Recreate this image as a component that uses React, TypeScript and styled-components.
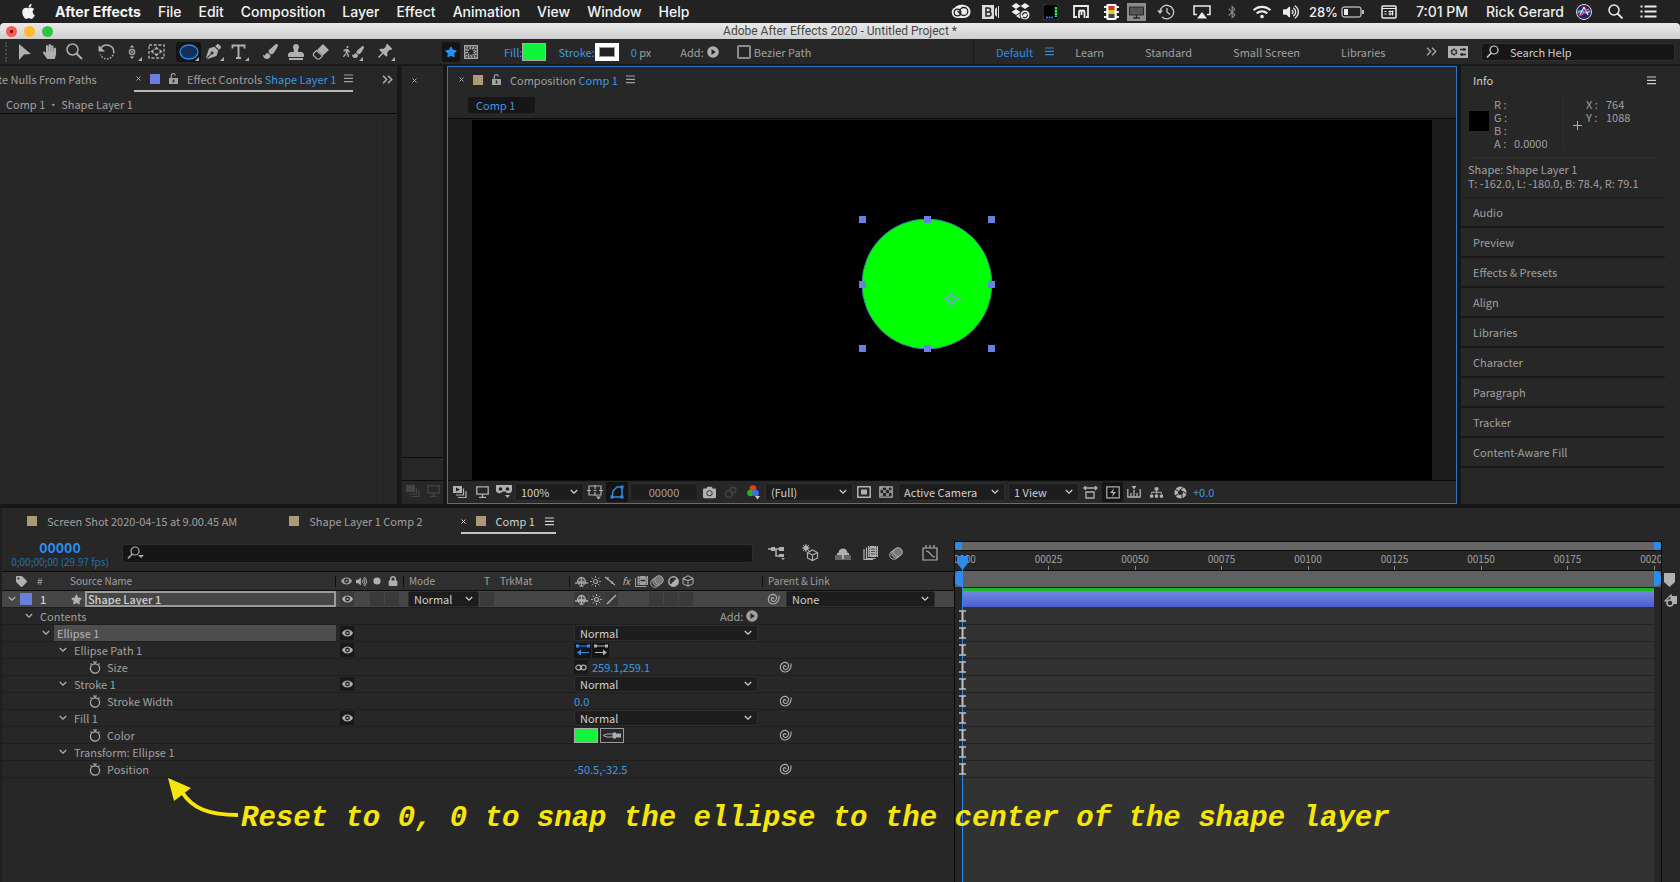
import React, { ReactNode } from 'react';
import styled, { createGlobalStyle, css } from 'styled-components';
import {
  FaApple, FaBluetoothB, FaCamera, FaDropbox, FaHandPaper, FaLock,
  FaPaintBrush, FaPenNib, FaSitemap, FaStar, FaTag, FaVolumeUp, FaWifi, FaWalking, FaStamp,
} from 'react-icons/fa';

const c = {
  panel: '#272727',
  gutter: '#171717',
  well: '#1d1d1d',
  field: '#161616',
  line: '#0c0c0c',
  text: '#a0a0a0',
  bright: '#cfcfcf',
  icon: '#b0b0b0',
  blue: '#3f98e0',
  accent: '#2d8ceb',
  tan: '#ab9a76',
  layer: '#6a7ede',
};

const Global = createGlobalStyle`
  *, *::before, *::after { box-sizing: border-box; }
  body { margin: 0; background: ${c.gutter}; }
  body, button, input, select {
    font-family: "Noto Sans CJK SC", "Noto Sans", sans-serif;
    font-size: 11px;
    line-height: 16px;
    color: ${c.text};
  }
  button { border: 0; padding: 0; background: none; white-space: nowrap; }
  input, select { margin: 0; border: 0; padding: 0; outline: 0; }
  svg { display: block; flex: none; }
`;

/* ---------- shared parts ---------- */

const Shell = styled.div`
  display: flex;
  flex-direction: column;
  min-height: 100vh;
  overflow: hidden;
`;

const IconCell = styled.button<{ $w?: number; $on?: boolean; $dim?: boolean; $h?: number }>`
  display: flex;
  flex: none;
  align-items: center;
  justify-content: center;
  position: relative;
  width: ${p => p.$w ?? 25}px;
  height: ${p => p.$h ?? 20}px;
  border-radius: 2px;
  color: ${p => (p.$dim ? '#444' : c.icon)};
  background: ${p => (p.$on ? '#141414' : 'none')};
`;

const Corner = styled.span`
  position: absolute;
  right: 2px;
  bottom: 1px;
  border: 2px solid transparent;
  border-right-color: ${c.icon};
  border-bottom-color: ${c.icon};
`;

const Swatch = styled.span<{ $color: string; $s?: number }>`
  flex: none;
  width: ${p => p.$s ?? 10}px;
  height: ${p => p.$s ?? 10}px;
  background: ${p => p.$color};
`;

const Blue = styled.span`
  color: ${c.blue};
`;

const Svg = ({ w = 18, h = 18, children }: { w?: number; h?: number; children: ReactNode }) => (
  <svg width={w} height={h} viewBox={`0 0 ${w} ${h}`} fill="none" stroke="currentColor" strokeWidth="1.5">{children}</svg>
);

const Burger = () => <Svg w={9} h={9}><path d="M0 1h9M0 4.300h9M0 7.600h9" strokeWidth="1.200" /></Svg>;
const Cross = () => <Svg w={5} h={5}><path d="M.5 .5l4 4M4.500 .5l-4 4" strokeWidth="1" /></Svg>;
const Chev = () => <Svg w={8} h={6}><path d="M.8 1l3.200 3.200L7.200 1" strokeWidth="1.300" /></Svg>;
const More = () => <Svg w={11} h={9}><path d="M1 .8l3.700 3.700L1 8.200M6 .8l3.700 3.700L6 8.200" /></Svg>;
const OpenLock = () => (
  <Svg w={9} h={11}><path d="M2.300 5V2.800a2 2 0 0 1 4-.3" strokeWidth="1.300" /><path d="M0 5h9v6H0z" fill="currentColor" stroke="none" /><path d="M4.500 6.500v3" stroke={c.panel} /></Svg>
);
const Lens = ({ caret }: { caret?: boolean }) => (
  <Svg w={18} h={14}><circle cx="8" cy="5" r="4" strokeWidth="1.200" /><path d="M5.200 8L1 12.500" />{caret && <path d="M11 9h6l-3 3z" fill="currentColor" stroke="none" />}</Svg>
);
const Eye = () => (
  <Svg w={11} h={8}><path d="M0 4C2-.8 9-.8 11 4 9 8.800 2 8.800 0 4z" fill="currentColor" stroke="none" /><circle cx="5.500" cy="4" r="2.400" fill="#222" stroke="none" /><circle cx="5.500" cy="4" r="1.100" fill="currentColor" stroke="none" /></Svg>
);
const Play = () => (
  <Svg w={12} h={12}><circle cx="6" cy="6" r="5.800" fill="currentColor" stroke="none" /><path d="M4.500 3l4.200 3-4.200 3z" fill="#222" stroke="none" /></Svg>
);
const Watch = () => (
  <Svg w={12} h={13}><circle cx="6" cy="7.500" r="4.600" strokeWidth="1.200" /><path d="M4 1h4M6 1v2M1.500 2.500l1 1M10.500 2.500l-1 1" strokeWidth="1.200" /></Svg>
);
const Whip = () => (
  <Svg w={13} h={12}><path d="M12 2.500C12.700 8 9 11.300 5.500 11 2 10.500 .6 7 1.800 4.300 3 1.500 6.500 .5 8.500 2.300 10.500 4.300 9.500 8 7 8.500 5 8.800 3.700 7 4.500 5.500 5.200 4.200 7 4.500 6.800 6" strokeWidth="1.100" /></Svg>
);
const Shy = () => (
  <Svg w={13} h={11}><path d="M2.500 6a4 4.500 0 0 1 8 0z" fill="currentColor" fillOpacity=".25" strokeWidth="1.300" /><path d="M6.500 1.500v8.500M0 7h13M4 7v2M9 7v2M4.500 10h4" strokeWidth="1.300" /></Svg>
);
const Sun = () => (
  <Svg w={11} h={11}><circle cx="5.500" cy="5.500" r="2" strokeWidth="1.200" /><path d="M5.500 0v2M5.500 9v2M0 5.500h2M9 5.500h2M1.600 1.600l1.400 1.400M8 8l1.400 1.400M9.400 1.600L8 3M3 8L1.600 9.400" strokeWidth="1" /></Svg>
);
const Film = () => (
  <Svg w={13} h={11}><path d="M2.500 0h10.500v9H2.500z" fill="currentColor" stroke="none" /><path d="M.5 2v8.500h11" strokeWidth="1" /><path d="M4.300 0v9M11.200 0v9" stroke="#2a2a2a" strokeWidth=".9" strokeDasharray="1.200 1.200" /><path d="M5.500 4.500h4.500" stroke="#2a2a2a" /></Svg>
);
const BigFilm = () => (
  <Svg w={15} h={14}><path d="M5 0h10v11H5z" fill="currentColor" stroke="none" /><path d="M3.500 1.500v11h9M1 3v10.500h9" strokeWidth="1.200" /><path d="M6.500 0v11M13.500 0v11" stroke="#2a2a2a" strokeWidth=".9" strokeDasharray="1.300 1.300" /><path d="M8 3h4M8 5.500h4M8 8h4" stroke="#2a2a2a" strokeWidth=".8" /></Svg>
);
const Blur = () => (
  <Svg w={14} h={13}><circle cx="5" cy="8" r="4.300" strokeWidth="1" /><circle cx="7" cy="6.500" r="4.300" strokeWidth="1" fill="#666" /><circle cx="9" cy="5" r="4.300" strokeWidth="1" fill="#777" /></Svg>
);
const Cube = () => (
  <Svg w={12} h={12}><path d="M6 .8l5 2.500v5.400l-5 2.500-5-2.500V3.300zM1 3.300l5 2.500 5-2.500M6 5.800v5.400" strokeWidth="1.100" /></Svg>
);

/* ---------- system menu bar ---------- */

const MenuBar = styled.nav`
  display: flex;
  align-items: center;
  height: 23px;
  padding: 0 20px;
  background: #222;
  color: #f2f2f2;
`;

const MenuItem = styled.button<{ $bold?: boolean }>`
  font: ${p => (p.$bold ? 700 : 500)} 14px/20px Inter, sans-serif;
  color: #f4f4f4;
  margin-right: 17px;
`;

const AppleMark = styled.span`
  margin-right: 18px;
`;

const Status = styled.div`
  display: flex;
  align-items: center;
  margin-left: auto;
`;

const StatusCell = styled.span<{ $w: number }>`
  display: flex;
  align-items: center;
  justify-content: center;
  width: ${p => p.$w}px;
  color: #ececec;
  font: 500 13px/20px Inter, sans-serif;
  white-space: nowrap;
`;

const StatusText = styled(StatusCell)`
  font-size: 14px;
`;

const Percent = styled(StatusCell)`
  justify-content: flex-end;
`;

/* ---------- window title and toolbar ---------- */

const TitleBar = styled.header`
  display: flex;
  align-items: center;
  justify-content: center;
  position: relative;
  height: 16px;
  background: linear-gradient(#e9e9e9, #d0d0d0);
  border-radius: 4px 4px 0 0;
  font: 400 12px/16px Roboto, sans-serif;
  color: #464646;
`;

const Lights = styled.span`
  position: absolute;
  left: 6px;
  top: 3px;
  display: flex;
  gap: 7px;
`;

const Light = styled.button<{ $color: string }>`
  width: 11px;
  height: 11px;
  border-radius: 50%;
  background: ${p => p.$color};
`;

const RedLight = styled(Light)`
  background: radial-gradient(circle, #5a0c08 0 1px, #fb5a52 2px);
`;

const ToolBar = styled.div`
  display: flex;
  align-items: center;
  height: 26px;
  background: ${c.panel};
  border-bottom: 1px solid #1c1c1c;
`;

const Tools = styled.div`
  display: flex;
  gap: 7px;
  width: 434px;
`;

const Grip = styled.span`
  width: 2px;
  height: 20px;
  margin: 0 -2px 0 5px;
  border-left: 2px dotted #484848;
`;

const ToolGroup = styled.div`
  display: flex;
`;

const Options = styled.div`
  display: flex;
  align-items: center;
  height: 100%;
  padding-left: 8px;
  flex: 1;
  border-right: 1px solid #1b1b1b;
`;

const OptionLink = styled.button<{ $ml: number }>`
  color: ${c.blue};
  margin-left: ${p => p.$ml}px;
`;

const FillChip = styled.button`
  width: 24px;
  height: 18px;
  background: #10f53c;
  border: 1px solid #aaa;
`;

const StrokeChip = styled(FillChip)`
  background: #222;
  border: 4px solid #fff;
  outline: 1px solid #999;
  outline-offset: -5px;
`;

const Amount = styled.span`
  margin: 0 29px 0 12px;
`;

const CheckLabel = styled.label`
  display: flex;
  align-items: center;
  gap: 3px;
  margin-left: 15px;
`;

const Check = styled.input`
  appearance: none;
  width: 14px;
  height: 14px;
  border: 2px solid #8c8c8c;
  border-radius: 2px;
`;

const Workspaces = styled.div`
  display: flex;
  align-items: center;
  gap: 41px;
  padding-left: 22px;
  width: 471px;
`;

const WorkspaceTab = styled.button<{ $on?: boolean }>`
  display: flex;
  align-items: center;
  gap: 12px;
  margin-right: ${p => (p.$on ? -20 : 0)}px;
  color: ${p => (p.$on ? c.accent : c.text)};
`;

const HelpBox = styled.label`
  display: flex;
  align-items: center;
  gap: 6px;
  width: 194px;
  height: 18px;
  margin: 0 5px 0 10px;
  padding-left: 4px;
  background: ${c.field};
  border: 1px solid #303030;
  border-radius: 3px;
  color: ${c.bright};
`;

const TextInput = styled.input`
  flex: 1;
  min-width: 0;
  height: 16px;
  background: transparent;
  color: ${c.bright};
  &::placeholder { color: ${c.bright}; opacity: 1; }
`;

/* ---------- upper workspace ---------- */

const Upper = styled.div`
  display: flex;
  gap: 4px;
  flex: 443 1 443px;
  padding: 1px 0 4px;
`;

const Panel = styled.section<{ $w?: number }>`
  display: flex;
  flex-direction: column;
  flex: none;
  width: ${p => p.$w}px;
  min-width: 0;
  background: ${c.panel};
`;

const PanelTabs = styled.div`
  display: flex;
  align-items: flex-start;
  height: 30px;
  padding-right: 4px;
  overflow: hidden;
`;

const PanelTab = styled.button<{ $line?: boolean; $ml?: number }>`
  display: flex;
  align-items: center;
  gap: 9px;
  height: 26px;
  margin-left: ${p => p.$ml ?? 0}px;
  padding: 1px 0 0 2px;
  color: ${c.text};
  border-bottom: 2px solid ${p => (p.$line ? '#b8b8b8' : 'transparent')};
`;

const CutTab = styled(PanelTab)`
  margin-left: -4px;
  width: 138px;
`;

const TabTitle = styled.span`
  display: flex;
  align-items: center;
  gap: 8px;
`;

const TabsMore = styled.button`
  margin: 9px 0 0 auto;
  color: ${c.icon};
`;

const Source = styled.div`
  height: 18px;
  padding: 0 6px;
  border-bottom: 1px solid ${c.line};
`;

const Empty = styled.div`
  flex: 1;
  margin-right: 17px;
  border-right: 1px solid #2b2b2b;
`;

const Sliver = styled(Panel)`
  border-left: 1px solid #202020;
`;

const SliverTop = styled.div`
  flex: 1;
  padding: 12px 10px;
  color: ${c.text};
`;

const SliverLine = styled.div`
  height: 24px;
  border: 1px solid ${c.line};
  border-width: 1px 0;
`;

const SliverFoot = styled.div`
  display: flex;
  height: 23px;
`;

const CompPanel = styled(Panel)`
  flex: 1;
  border: 1px solid #3079c2;
`;

const CompCrumb = styled.div`
  height: 22px;
  padding-left: 20px;
  border-bottom: 1px solid ${c.line};
`;

const Crumb = styled.button`
  width: 67px;
  height: 16px;
  padding-left: 8px;
  text-align: left;
  color: ${c.blue};
  background: ${c.field};
  border-radius: 2px;
`;

const Viewer = styled.div`
  flex: 1;
  padding: 1px 24px 0;
  background: ${c.well};
`;

const Stage = styled.div`
  position: relative;
  height: 100%;
  background: #000;
`;

const Shape = styled.svg`
  position: absolute;
  left: calc(50% - 95px);
  top: 94px;
`;

const CompFoot = styled.div`
  display: flex;
  align-items: center;
  height: 23px;
  padding-left: 1px;
  border-top: 1px solid ${c.line};
`;

const SelectBox = styled.span<{ $w: number; $h?: number; $ml?: number }>`
  display: flex;
  align-items: center;
  flex: none;
  position: relative;
  width: ${p => p.$w}px;
  height: ${p => p.$h ?? 18}px;
  margin-left: ${p => p.$ml ?? 0}px;
  background: ${c.well};
  border: 1px solid #2f2f2f;
  border-radius: 2px;
  color: ${c.bright};
  > svg { position: absolute; right: 5px; pointer-events: none; }
`;

const Select = styled.select`
  appearance: none;
  width: 100%;
  height: 100%;
  padding-left: 5px;
  background: transparent;
  color: ${c.bright};
  line-height: 14px;
`;

const Drop = ({ w, h, ml, value, label }: { w: number; h?: number; ml?: number; value: string; label: string }) => (
  <SelectBox $w={w} $h={h} $ml={ml}>
    <Select aria-label={label} defaultValue={value}><option>{value}</option></Select>
    <Chev />
  </SelectBox>
);

const Frame = styled.button`
  width: 68px;
  height: 18px;
  margin-left: 2px;
  background: ${c.well};
  border: 1px solid #2f2f2f;
  border-radius: 2px;
  color: ${c.text};
`;

const Exposure = styled.button`
  color: ${c.blue};
`;

/* ---------- info panel and collapsed panels ---------- */

const Side = styled.aside`
  flex: none;
  width: 219px;
  padding: 0 15px 0 0;
  background: ${c.panel};
`;

const InfoHead = styled.div`
  display: flex;
  align-items: center;
  justify-content: space-between;
  height: 28px;
  padding: 0 9px 0 12px;
  color: ${c.bright};
`;

const InfoBody = styled.div`
  display: grid;
  grid-template-columns: 25px 70px 14px 1fr;
  margin: 0 8px 0 8px;
  height: 64px;
  border-bottom: 1px solid #303030;
`;

const InfoColor = styled.span`
  width: 20px;
  height: 20px;
  margin-top: 17px;
  background: #000;
`;

const InfoList = styled.dl`
  display: grid;
  grid-template-columns: 18px 1fr;
  align-content: start;
  margin: 0;
  line-height: 13px;
  height: 57px;
  padding-top: 4px;
  border-right: 1px solid #2e2e2e;
`;

const InfoRight = styled(InfoList)`
  padding-left: 8px;
  border: 0;
`;

const Term = styled.dt`
  margin: 0;
`;

const Data = styled.dd`
  margin: 0 0 0 2px;
`;

const Plus = styled.span`
  margin: 27px 0 0 9px;
  color: ${c.icon};
`;

const InfoNote = styled.p`
  margin: 0;
  padding: 4px 0 0 7px;
  height: 40px;
  line-height: 14px;
  border-bottom: 1px solid #1c1c1c;
  white-space: nowrap;
`;

const Collapsed = styled.button`
  display: block;
  width: 204px;
  height: 30px;
  padding: 0 0 0 12px;
  text-align: left;
  color: ${c.text};
  border-bottom: 2px solid #191919;
`;

/* ---------- timeline ---------- */

const Timeline = styled.section`
  display: flex;
  flex-direction: column;
  flex: 374 1 374px;
  position: relative;
  background: ${c.panel};
  border-left: 2px solid #1f1f1f;
`;

const CompTabs = styled.div`
  display: flex;
  gap: 50px;
  height: 32px;
  padding-left: 25px;
`;

const CompTab = styled.button<{ $on?: boolean }>`
  display: flex;
  align-items: center;
  gap: 10px;
  height: 26px;
  padding: 2px 2px 0 0;
  margin-left: ${p => (p.$on ? -14 : 0)}px;
  color: ${p => (p.$on ? '#d2d2d2' : c.text)};
  border-bottom: 2px solid ${p => (p.$on ? '#c4c4c4' : 'transparent')};
`;

const TimelineBody = styled.div`
  display: flex;
  flex: 1;
`;

const Outline = styled.div`
  flex: none;
  width: 952px;
`;

const OutlineTools = styled.div`
  display: flex;
  align-items: center;
  height: 32px;
  padding-bottom: 5px;
  border-bottom: 1px solid ${c.line};
`;

const Clock = styled.div`
  width: 116px;
  text-align: center;
  font-size: 10px;
  line-height: 13px;
  color: #2672ad;
`;

const Big = styled.div`
  font-size: 14px;
  font-weight: 700;
  line-height: 16px;
  color: ${c.accent};
`;

const LayerSearch = styled.label`
  display: flex;
  align-items: center;
  width: 631px;
  height: 19px;
  margin: 0 8px 0 4px;
  padding-left: 4px;
  background: #151515;
  border: 1px solid #2e2e2e;
  border-radius: 3px;
  color: ${c.icon};
`;

const columns = css`
  display: grid;
  grid-template-columns: 334px 68px 166px 193px 1fr;
`;

const HeadRow = styled.div`
  ${columns}
  height: 19px;
  background: #2f2f2f;
  border-bottom: 1px solid ${c.line};
  font-size: 10px;
  line-height: 18px;
`;

const HeadCell = styled.div`
  display: flex;
  align-items: center;
  gap: 2px;
  padding-left: 5px;
  position: relative;
  color: ${c.text};
  &::after {
    content: "";
    position: absolute;
    right: 0;
    top: 4px;
    height: 11px;
    border-right: 1px solid #111;
  }
`;

const Text = styled.span<{ $w: number }>`
  flex: none;
  width: ${p => p.$w}px;
`;

const Row = styled.div<{ $layer?: boolean }>`
  ${columns}
  height: 17px;
  border-bottom: 1px solid #1f1f1f;
  background: ${p => (p.$layer ? '#464646' : 'none')};
`;

const Name = styled.div<{ $depth: number }>`
  display: flex;
  align-items: center;
  padding-left: ${p => p.$depth * 17 + 2}px;
  min-width: 0;
`;

const Twirl = styled.button`
  display: flex;
  align-items: center;
  justify-content: center;
  flex: none;
  width: 16px;
  height: 16px;
  color: ${c.icon};
`;

const NameText = styled.span<{ $on?: boolean }>`
  flex: 1;
  height: 16px;
  line-height: 16px;
  padding-left: 3px;
  color: ${p => (p.$on ? '#b4b4b4' : c.text)};
  background: ${p => (p.$on ? '#4d4d4d' : 'none')};
`;

const StopWatch = styled.button`
  margin: 0 3px 0 34px;
  color: ${c.icon};
`;

const NameInput = styled.input`
  width: 252px;
  height: 16px;
  margin-left: 3px;
  padding-left: 1px;
  background: transparent;
  border: 2px solid #9c9c9c;
  color: ${c.bright};
  font-weight: 500;
  line-height: 12px;
`;

const Index = styled.span`
  width: 39px;
  padding-left: 8px;
  color: ${c.bright};
  font-weight: 500;
`;

const Cell = styled.div`
  display: flex;
  align-items: center;
  padding-left: 4px;
  gap: 1px;
`;

const Box = styled.button<{ $none?: boolean; $dark?: boolean }>`
  display: flex;
  align-items: center;
  justify-content: center;
  flex: none;
  width: 14px;
  height: 14px;
  color: ${c.icon};
  background: ${p => (p.$none ? 'none' : p.$dark ? '#181818' : '#3a3a3a')};
`;

const Value = styled.button<{ $ml?: number }>`
  margin-left: ${p => p.$ml ?? 0}px;
  color: ${c.blue};
`;

const AddHint = styled.button`
  display: flex;
  align-items: center;
  gap: 3px;
  margin-left: 146px;
  color: ${c.text};
`;

const PickWhip = styled.button<{ $ml: number }>`
  margin: 0 5px 0 ${p => p.$ml}px;
  color: ${c.icon};
`;

const ColorChip = styled.button`
  width: 24px;
  height: 15px;
  background: #10f53c;
  border: 1px solid #aaa;
`;

const DropperBtn = styled.button`
  width: 24px;
  height: 15px;
  margin-left: 1px;
  border: 1px solid #999;
  color: ${c.icon};
`;

/* ---------- time graph ---------- */

const Graph = styled.div`
  flex: 1;
  display: flex;
  flex-direction: column;
  position: relative;
  min-width: 0;
  overflow: hidden;
  padding-top: 1px;
  border: 1px solid ${c.line};
  border-width: 0 1px;
`;

const NavBar = styled.div`
  display: flex;
  height: 10px;
  border: 1px solid ${c.line};
  border-width: 1px 0;
  background: #666;
`;

const Knob = styled.span<{ $end?: boolean; $h: number }>`
  width: 7px;
  height: ${p => p.$h}px;
  background: ${c.accent};
  border-radius: ${p => (p.$end ? '0 5px 5px 0' : '5px 0 0 5px')};
  margin-left: ${p => (p.$end ? 'auto' : '0')};
`;

const Ruler = styled.div`
  display: flex;
  justify-content: space-between;
  height: 20px;
  padding: 1px 7px 0;
  border-bottom: 1px solid ${c.line};
`;

const Tick = styled.span`
  display: flex;
  flex-direction: column;
  align-items: center;
  width: 0;
  font-size: 10px;
  line-height: 14px;
  color: ${c.text};
  &::after {
    content: "";
    width: 1px;
    height: 4px;
    background: #8a8a8a;
  }
`;

const WorkArea = styled.div`
  display: flex;
  height: 16px;
  background: #606060;
`;

const Cached = styled.div`
  height: 4px;
  margin: 0 7px;
  background: #20b42a;
  border-top: 1px solid #0d2a0d;
`;

const Tracks = styled.div`
  flex: 1;
  margin: 0 7px;
  background: #323232;
`;

const Bar = styled.div`
  height: 16px;
  margin-bottom: 1px;
  background: linear-gradient(#7388de, #4a5fd0);
`;

const Lane = styled.div`
  height: 17px;
  border-bottom: 1px solid #232323;
  color: #c0c0c0;
  > svg { margin-left: -4px; position: relative; z-index: 1; }
`;

const PlayHead = styled.div`
  position: absolute;
  left: 7px;
  top: 16px;
  bottom: 0;
  border-left: 1px solid ${c.accent};
  color: ${c.accent};
  > svg { margin-left: -6px; }
`;

const Edge = styled.div`
  width: 18px;
  padding: 33px 0 0 2px;
`;

const EdgeBtn = styled.button`
  display: block;
  margin-bottom: 7px;
  color: ${c.icon};
`;

/* ---------- annotation ---------- */

const Note = styled.p`
  position: absolute;
  left: 166px;
  top: 270px;
  display: flex;
  align-items: flex-start;
  gap: 2px;
  margin: 0;
  pointer-events: none;
  color: #f7e60c;
  font: italic 700 29px/32px "Liberation Mono", monospace;
  white-space: nowrap;
`;

const NoteText = styled.span`
  padding-top: 25px;
`;

/* ---------- data ---------- */

const menus = ['File', 'Edit', 'Composition', 'Layer', 'Effect', 'Animation', 'View', 'Window', 'Help'];
const sidePanels = ['Audio', 'Preview', 'Effects & Presets', 'Align', 'Libraries', 'Character', 'Paragraph', 'Tracker', 'Content-Aware Fill'];
const ticks = ['00000', '00025', '00050', '00075', '00100', '00125', '00150', '00175', '00200'];

type RowData = { name: string; depth: number; prop?: boolean; eye?: boolean; on?: boolean; value?: ReactNode };

const blend = <Drop w={184} h={16} value="Normal" label="Blend mode" />;

const rows: RowData[] = [
  { name: 'Contents', depth: 1, value: <AddHint>Add: <Play /></AddHint> },
  { name: 'Ellipse 1', depth: 2, eye: true, on: true, value: blend },
  {
    name: 'Ellipse Path 1', depth: 3, eye: true, value: (
      <>
        <IconCell aria-label="Forward path" $w={17} $h={15} $on><Svg w={14} h={12}><path d="M2 2h10M3 8.500h10" stroke={c.accent} strokeWidth="1.200" /><path d="M0 .5h3v3H0zM11 .5h3v3h-3zM1 8.500l4-3v6z" fill={c.accent} stroke="none" /></Svg></IconCell>
        <IconCell aria-label="Reverse path" $w={17} $h={15} $on><Svg w={14} h={12}><path d="M2 2h10M1 8.500h10" strokeWidth="1.200" /><path d="M0 .5h3v3H0zM11 .5h3v3h-3zM13 8.500l-4-3v6z" fill="currentColor" stroke="none" /></Svg></IconCell>
      </>
    ),
  },
  {
    name: 'Size', depth: 3, prop: true, value: (
      <>
        <Box $dark aria-label="Constrain"><Svg w={12} h={7}><ellipse cx="3.800" cy="3.500" rx="3" ry="2.300" strokeWidth="1.200" /><ellipse cx="8.200" cy="3.500" rx="3" ry="2.300" strokeWidth="1.200" /></Svg></Box>
        <Value $ml={3}>259.1,259.1</Value>
      </>
    ),
  },
  { name: 'Stroke 1', depth: 3, eye: true, value: blend },
  { name: 'Stroke Width', depth: 3, prop: true, value: <Value>0.0</Value> },
  { name: 'Fill 1', depth: 3, eye: true, value: blend },
  {
    name: 'Color', depth: 3, prop: true, value: (
      <>
        <ColorChip aria-label="Color" />
        <DropperBtn aria-label="Eyedropper"><Svg w={22} h={13}><path d="M2 6.500l4-1.500h6v3H6z" strokeWidth="1" /><path d="M12 3.500h3v1h5v4h-5v1h-3z" fill="currentColor" stroke="none" /></Svg></DropperBtn>
      </>
    ),
  },
  { name: 'Transform: Ellipse 1', depth: 3 },
  { name: 'Position', depth: 3, prop: true, value: <Value>-50.5,-32.5</Value> },
];

const SystemBar = () => (
  <MenuBar>
    <AppleMark><FaApple size={17} /></AppleMark>
    <MenuItem $bold>After Effects</MenuItem>
    {menus.map(m => <MenuItem key={m}>{m}</MenuItem>)}
    <Status>
      <StatusCell $w={30}><Svg w={20} h={15}><path d="M6 14a5.500 5.500 0 0 1-2-10.500C6 1 9 .3 12 .8c4 .3 7.500 3 7.500 7S16.500 14 13 14z" fill="#eee" stroke="none" /><circle cx="6.500" cy="8.500" r="3.300" stroke="#222" strokeWidth="1.300" /><circle cx="12.800" cy="7.500" r="4" stroke="#222" strokeWidth="1.300" /><path d="M6.500 7l4 4" stroke="#222" strokeWidth="1.300" /></Svg></StatusCell>
      <StatusCell $w={30}><Svg w={18} h={14}><path d="M0 0h12v14H0zM13 4l2-2v10l-2-2zM16 1h1v12h-1z" fill="#ddd" stroke="none" /><path d="M4 3v8h3a2 2 0 0 0 0-4H4h2.500a2 2 0 0 0 0-4z" stroke="#222" /></Svg></StatusCell>
      <StatusCell $w={30}><Svg w={20} h={18}><g transform="scale(.036)"><path d="M0 0h1v1H0z" fill="none" stroke="none" /></g><path d="M5 0l4.500 3L5 6 .5 3zM14 0l4.500 3L14 6 9.500 3zM5 6l4.500 3L5 12 .5 9zM5 13l4-2.500 3 2-3 3z" fill="#eee" stroke="none" /><circle cx="14" cy="12" r="5" fill="#eee" stroke="#222" strokeWidth="1" /><path d="M11.500 12.500a2.600 2.600 0 0 1 4.500-2M16.500 11.500a2.600 2.600 0 0 1-4.500 2.300" stroke="#222" strokeWidth="1.200" /></Svg></StatusCell>
      <StatusCell $w={30}><Svg w={16} h={16}><rect width="16" height="16" rx="3" fill="#050505" stroke="#444" strokeWidth="1" /><path d="M3 13.500h7" stroke="#2d6be8" strokeWidth="2" strokeDasharray="2 .6" /><path d="M13 3v10" stroke="#44e052" strokeWidth="2.500" strokeDasharray="2.400 .6" /></Svg></StatusCell>
      <StatusCell $w={30}><Svg w={18} h={15}><path d="M5 13H2V2h14v11h-2M7 14V8c0-2 2.500-2 2.500 0v3V8c0-2 3-2 3 0v6" strokeWidth="1.800" /></Svg></StatusCell>
      <StatusCell $w={30}><Svg w={15} h={16}><path d="M0 3h15M0 8h15M0 13h15" strokeWidth="2" /><rect x="3" y=".8" width="9" height="14.400" rx="1" fill="#eee" stroke="#fff" /><path d="M4.500 2h6v4h-6z" fill="#d93025" stroke="none" /><path d="M4.500 6h6v4h-6z" fill="#e8c81e" stroke="none" /><path d="M4.500 10h6v4h-6z" fill="#444" stroke="none" /></Svg></StatusCell>
      <StatusCell $w={20}><Svg w={19} h={18}><path d="M0 0h19v18H0z" fill="#8c8c8c" stroke="none" /><path d="M2.500 4h14v8h-14z" fill="#555" stroke="#2a2a2a" strokeWidth="1" /><path d="M9.500 12v2.500M6 15h7" stroke="#2a2a2a" /></Svg></StatusCell>
      <StatusCell $w={40}><Svg w={18} h={16}><path d="M3 8a6.800 6.800 0 1 1 2 4.900M10 4v4l3 2.500" stroke="#ccc" strokeWidth="1.300" /><path d="M0 6.500h6L3 10z" fill="#ccc" stroke="none" /></Svg></StatusCell>
      <StatusCell $w={32}><Svg w={18} h={14}><path d="M4 9.500H1V1h16v8.500h-3" /><path d="M9 7l5 6.500H4z" fill="currentColor" stroke="none" /></Svg></StatusCell>
      <StatusCell $w={28}><FaBluetoothB size={14} color="#888" /></StatusCell>
      <StatusCell $w={32}><FaWifi size={18} /></StatusCell>
      <StatusCell $w={26}><FaVolumeUp size={16} /></StatusCell>
      <Percent $w={34}>28%</Percent>
      <StatusCell $w={29}><Svg w={24} h={12}><rect x="1" y="1" width="19" height="10" rx="2" strokeWidth="1" /><path d="M3 3h4v6H3z" fill="currentColor" stroke="none" /><path d="M22 4v4" /></Svg></StatusCell>
      <StatusCell $w={43}><Svg w={16} h={14}><rect x="1" y="1" width="14" height="12" rx="1" /><path d="M1 3.500h14M3.500 6.500h2M3.500 9h2M7.500 6.500h5M7.500 9h5M9 5.500v5M11.500 5.500v5" strokeWidth="1" /></Svg></StatusCell>
      <StatusText $w={64}>7:01 PM</StatusText>
      <StatusText $w={102}>Rick Gerard</StatusText>
      <StatusCell $w={16}><Svg w={16} h={16}><circle cx="8" cy="8" r="7.500" fill="#31205e" stroke="#ddd" strokeWidth="1" /><path d="M2 9c3-6 6 3 12-2" stroke="#36d6e8" strokeWidth="2" /><path d="M8 3c-1 3-3 5-4 8M8 3c1 3 3 5 4 8" stroke="#e8e0ff" strokeWidth="1.200" /><path d="M3 11c4 1 7-6 10-6" stroke="#e04f9e" /></Svg></StatusCell>
      <StatusCell $w={46}><Svg w={15} h={15}><circle cx="6" cy="6" r="5" /><path d="M9.500 9.500l5 5" strokeWidth="1.800" /></Svg></StatusCell>
      <StatusCell $w={22}><Svg w={18} h={13}><path d="M4.500 1.500h12M4.500 6.500h12M4.500 11.500h12M.5 1.500h2M.5 6.500h2M.5 11.500h2" strokeWidth="1.800" /></Svg></StatusCell>
    </Status>
  </MenuBar>
);

const Tool = ({ label, children, on, corner }: { label: string; children: ReactNode; on?: boolean; corner?: boolean }) => (
  <IconCell aria-label={label} $on={on}>{children}{corner && <Corner />}</IconCell>
);

const AppTools = () => (
  <ToolBar>
    <Tools>
      <Grip />
      <ToolGroup>
        <Tool label="Selection"><Svg w={14} h={16}><path d="M1 0l12 10-7 .5L1 16z" fill="currentColor" stroke="none" /></Svg></Tool>
        <Tool label="Hand"><FaHandPaper size={15} /></Tool>
        <Tool label="Zoom"><Svg w={17} h={17}><circle cx="6.500" cy="6.500" r="5.500" /><path d="M10.500 10.500l5.500 5.500" strokeWidth="2" /></Svg></Tool>
      </ToolGroup>
      <ToolGroup>
        <Tool label="Rotation"><Svg w={17} h={16}><path d="M2.500 5a7 7 0 0 1 13.300 3" /><path d="M15.800 8a7 7 0 0 1-13.500 2.500" strokeDasharray="1.500 1.500" /><path d="M.5 1v6.500H7z" fill="currentColor" stroke="none" /></Svg></Tool>
        <Tool label="Camera" corner><Svg w={10} h={16}><circle cx="5" cy="8" r="2.600" strokeWidth="1.300" /><circle cx="5" cy="8" r="1" fill="currentColor" stroke="none" /><path d="M5 1l2.200 2.500H2.800zM5 15l2.200-2.500H2.800z" fill="currentColor" stroke="none" /></Svg></Tool>
        <Tool label="Pan behind"><Svg w={17} h={15}><rect x="1" y="1" width="15" height="13" strokeDasharray="3 1.700" strokeWidth="1.300" /><path d="M8.500 2.500l2.500 3H6zM8.500 12.500l2.500-3H6zM2.500 7.500l3-2.500v5zM14.500 7.500l-3-2.500v5z" fill="currentColor" stroke="none" /></Svg></Tool>
      </ToolGroup>
      <ToolGroup>
        <Tool label="Ellipse" on corner><Svg w={20} h={16}><ellipse cx="10" cy="8" rx="9" ry="7" fill="#12305a" stroke={c.accent} strokeWidth="1.300" /></Svg></Tool>
        <Tool label="Pen" corner><FaPenNib size={15} /></Tool>
        <Tool label="Type" corner><Svg w={15} h={15}><path d="M1.500 4.500V1.500h12v3M7.500 1.500v12.500M5 14h5" strokeWidth="1.900" /></Svg></Tool>
      </ToolGroup>
      <ToolGroup>
        <Tool label="Brush"><FaPaintBrush size={15} /></Tool>
        <Tool label="Clone stamp"><FaStamp size={16} /></Tool>
        <Tool label="Eraser"><Svg w={18} h={16}><path d="M11 0l6 6-6 5.500L5 6z" fill="currentColor" stroke="none" /><path d="M4.500 6.500l6 5.500-3 3H5L1.500 11.500v-2z" strokeWidth="1.200" /></Svg></Tool>
      </ToolGroup>
      <ToolGroup>
        <Tool label="Roto brush" corner><FaWalking size={11} /><FaPaintBrush size={12} /></Tool>
      </ToolGroup>
      <ToolGroup>
        <Tool label="Puppet pin" corner><Svg w={15} h={15}><g transform="rotate(45 7.500 7.500)" stroke="none" fill="currentColor"><path d="M4 0h7v2l-1 1v3l2.500 2.500V10h-10V8.500L5 6V3L4 2z" /><path d="M6.800 10h1.400v6H6.800z" /></g></Svg></Tool>
      </ToolGroup>
    </Tools>
    <Options>
      <IconCell aria-label="Shape mode" $w={18} $on><FaStar size={12} color={c.accent} /></IconCell>
      <IconCell aria-label="Mask mode" $w={22}><Svg w={14} h={14}><rect x=".7" y=".7" width="12.600" height="12.600" strokeWidth="1.300" /><rect x="2.500" y="2.500" width="9" height="9" strokeWidth="2" strokeDasharray="1.500 1.500" /><circle cx="7" cy="7" r="3.500" fill={c.panel} strokeDasharray="1.400 1" /></Svg></IconCell>
      <OptionLink $ml={22}>Fill:</OptionLink>
      <FillChip aria-label="Fill color" />
      <OptionLink $ml={12}>Stroke:</OptionLink>
      <StrokeChip aria-label="Stroke color" />
      <Amount><Blue>0</Blue> px</Amount>
      <WorkspaceTab>Add:</WorkspaceTab>
      <IconCell aria-label="Add" $w={18}><Play /></IconCell>
      <CheckLabel><Check type="checkbox" />Bezier Path</CheckLabel>
    </Options>
    <Workspaces>
      <WorkspaceTab $on>Default <Burger /></WorkspaceTab>
      <WorkspaceTab>Learn</WorkspaceTab>
      <WorkspaceTab>Standard</WorkspaceTab>
      <WorkspaceTab>Small Screen</WorkspaceTab>
      <WorkspaceTab>Libraries</WorkspaceTab>
      <WorkspaceTab aria-label="More workspaces"><More /></WorkspaceTab>
    </Workspaces>
    <IconCell aria-label="Sync settings" $w={26}><Svg w={20} h={12}><path d="M0 0h20v12H0z" fill="currentColor" stroke="none" /><circle cx="6" cy="6" r="2.500" stroke="#222" strokeWidth="1.800" strokeDasharray="2 .6" /><path d="M12 3.500h6M12 8.500h6M16 2v3M14 7v3" stroke="#222" strokeWidth="1.300" /></Svg></IconCell>
    <HelpBox><Lens /><TextInput placeholder="Search Help" aria-label="Search Help" /></HelpBox>
  </ToolBar>
);

const handles = [5, 70, 134];

const Composition = () => (
  <CompPanel>
    <PanelTabs>
      <PanelTab $ml={9}>
        <Cross /><Swatch $color={c.tan} /><OpenLock />
        <TabTitle><span>Composition <Blue>Comp 1</Blue></span><Burger /></TabTitle>
      </PanelTab>
    </PanelTabs>
    <CompCrumb><Crumb>Comp 1</Crumb></CompCrumb>
    <Viewer>
      <Stage>
        <Shape width="140" height="140" viewBox="0 0 140 140">
          <circle cx="70" cy="70" r="65" fill="#00ff00" stroke="#3f7fb0" strokeWidth="1" />
          {handles.map(y => handles.map(x => (x === 70 && y === 70 ? null : <rect key={`${x}-${y}`} x={x - 3} y={y - 3} width="7" height="7" fill="#6680e4" />)))}
          <path d="M94.500 80l5 5-5 5-5-5zM94.500 77v4M94.500 90v4M86.500 85h4M99 85h5" stroke="#5fb3b8" strokeWidth="2" fill="none" />
        </Shape>
      </Stage>
    </Viewer>
    <CompFoot>
      <IconCell aria-label="Preview" $w={22}><Svg w={14} h={12}><path d="M0 0h9v7H0z" fill="currentColor" stroke="none" /><path d="M3 1.500l4 2-4 2z" fill="#222" stroke="none" /><path d="M10.500 2.500v6.500H3M13 5v6.500H5" strokeWidth="1.200" /></Svg></IconCell>
      <IconCell aria-label="Monitor" $w={22}><Svg w={13} h={12}><path d="M.8 .8h11.400v7.400H.8zM6.500 8v3M3 11.300h7" strokeWidth="1.300" /></Svg></IconCell>
      <IconCell aria-label="Mask" $w={22}><Svg w={16} h={14}><path d="M0 0h16v5c0 4-5.500 4-6.500 1.500h-3C5.500 9 0 9 0 5z" fill="currentColor" stroke="none" /><circle cx="4.500" cy="4" r="1.800" fill="#222" stroke="none" /><circle cx="11.500" cy="4" r="1.800" fill="#222" stroke="none" /><path d="M9 10h5l-2.500 3z" fill="currentColor" stroke="none" /></Svg></IconCell>
      <Drop w={69} value="100%" label="Magnification" />
      <IconCell aria-label="Grid" $w={22}><Svg w={16} h={15}><path d="M2 1h12v9H2zM8 0v4M8 7v4M0 5.500h4M12 5.500h4M6.500 5.500h3" strokeWidth="1.200" /><path d="M9 11.500h5l-2.500 3z" fill="currentColor" stroke="none" /></Svg></IconCell>
      <IconCell aria-label="Mask visibility" $w={22} $on><Svg w={14} h={14}><path d="M2 12l1-6 4-4h5v10z" stroke={c.accent} /><path d="M.5 10.500h3v3h-3zM10.500 10.500h3v3h-3zM10.500 .5h3v3h-3z" fill={c.accent} stroke="none" /></Svg></IconCell>
      <Frame>00000</Frame>
      <IconCell aria-label="Snapshot" $w={22}><FaCamera size={13} /></IconCell>
      <IconCell aria-label="Show snapshot" $w={22} $dim><Svg w={14} h={13}><circle cx="5" cy="8" r="3.500" /><circle cx="9" cy="4" r="2.800" /></Svg></IconCell>
      <IconCell aria-label="Channels" $w={23}><Svg w={14} h={15}><g stroke="none"><circle cx="6" cy="3.500" r="3.300" fill="#f03a20" /><circle cx="3.500" cy="8" r="3.300" fill="#22b422" /><circle cx="8.500" cy="8" r="3.300" fill="#3f6cf0" /><path d="M8 11h5l-2.500 3.500z" fill="#ccc" /></g></Svg></IconCell>
      <Drop w={88} value="(Full)" label="Resolution" />
      <IconCell aria-label="Region of interest" $w={22}><Svg w={14} h={12}><path d="M.8 .8h12.400v10.400H.8z" /><path d="M4 3.500h6v5H4z" fill="currentColor" stroke="none" /></Svg></IconCell>
      <IconCell aria-label="Transparency grid" $w={22}><Svg w={14} h={12}><path d="M.8 .8h12.400v10.400H.8z" strokeWidth="1.200" /><path d="M1 1h3v3H1zM7 1h3v3H7zM4 4h3v3H4zM10 4h3v3h-3zM1 7h3v3H1zM7 7h3v3H7z" fill="currentColor" fillOpacity=".7" stroke="none" /></Svg></IconCell>
      <Drop w={107} ml={1} value="Active Camera" label="Camera" />
      <Drop w={71} ml={3} value="1 View" label="View layout" />
      <IconCell aria-label="Pixel aspect" $w={23}><Svg w={15} h={13}><path d="M1 2h13M3 6h8v6H3zM3 0L1 2l2 2M12 0l2 2-2 2" strokeWidth="1.300" /></Svg></IconCell>
      <IconCell aria-label="Fast previews" $w={21} $on><Svg w={14} h={13}><path d="M.8 .8h12.400v11H.8z" strokeWidth="1.200" /><path d="M8 2L4 7h3l-1 4 4-5H7z" fill="currentColor" stroke="none" /></Svg></IconCell>
      <IconCell aria-label="Timeline" $w={22}><Svg w={14} h={12}><path d="M.8 3v8h12.400V3M4 11V7M7 11V4M10 11V7" strokeWidth="1.300" /><path d="M4.500 0h5L7 3.500z" fill="currentColor" stroke="none" /></Svg></IconCell>
      <IconCell aria-label="Flowchart" $w={22}><FaSitemap size={13} /></IconCell>
      <IconCell aria-label="Exposure" $w={26}><Svg w={13} h={13}><circle cx="6.500" cy="6.500" r="4.300" strokeWidth="3.600" /><path d="M6 4L10 .5M9 5.500l4 2.500M8 9l0 4M4.500 8L1 10M4 5L1 3" stroke={c.panel} strokeWidth="1" /></Svg></IconCell>
      <Exposure>+0.0</Exposure>
    </CompFoot>
  </CompPanel>
);

const Info = () => (
  <Side>
    <InfoHead>Info <Burger /></InfoHead>
    <InfoBody>
      <InfoColor />
      <InfoList>
        <Term>R :</Term><Data />
        <Term>G :</Term><Data />
        <Term>B :</Term><Data />
        <Term>A :</Term><Data>0.0000</Data>
      </InfoList>
      <Plus><Svg w={9} h={9}><path d="M4.500 0v9M0 4.500h9" strokeWidth="1" /></Svg></Plus>
      <InfoRight>
        <Term>X :</Term><Data>764</Data>
        <Term>Y :</Term><Data>1088</Data>
      </InfoRight>
    </InfoBody>
    <InfoNote>Shape: Shape Layer 1<br />T: -162.0, L: -180.0, B: 78.4, R: 79.1</InfoNote>
    {sidePanels.map(p => <Collapsed key={p}>{p}</Collapsed>)}
  </Side>
);

const LayerOutline = () => (
  <Outline>
    <OutlineTools>
      <Clock><Big>00000</Big>0;00;00;00 (29.97 fps)</Clock>
      <LayerSearch><Lens caret /><TextInput aria-label="Search layers" /></LayerSearch>
      <IconCell aria-label="Mini flowchart" $w={32}><Svg w={18} h={14}><path d="M0 3h8M8 3v7h4M8 3h4" /><path d="M3 1h4v4H3zM11 1h5v4h-5zM11 8h5v3h-5zM13 12h4l-2 2z" fill="currentColor" stroke="none" /></Svg></IconCell>
      <IconCell aria-label="Draft 3D" $w={34}><Svg w={18} h={18}><path d="M11.500 6l5 2.500v5.500l-5 2.500-5-2.500V8.500zM6.500 8.500l5 2.500 5-2.500M11.500 11v5.500" strokeWidth="1.200" /><circle cx="5" cy="4" r="2.500" fill="currentColor" stroke="none" /><path d="M5 0v8M1 4h8M2 1l6 6M8 1L2 7" strokeWidth="1" /></Svg></IconCell>
      <IconCell aria-label="Hide shy" $w={32}><Svg w={16} h={13}><path d="M0 8h16v5H0z" fill="#666" stroke="none" /><path d="M3.500 6a4.500 4.500 0 0 1 9 0zM7 5h2v7H7zM2 6h12v2H2z" fill="currentColor" stroke="none" /></Svg></IconCell>
      <IconCell aria-label="Frame blending" $w={22}><BigFilm /></IconCell>
      <IconCell aria-label="Motion blur" $w={30}><Blur /></IconCell>
      <IconCell aria-label="Graph editor" $w={38}><Svg w={16} h={16}><path d="M1 3h14v12H1zM4 0v3M8 0v3M12 0v3M4 6c5 0 4 6 9 6" strokeWidth="1.200" /></Svg></IconCell>
    </OutlineTools>
    <HeadRow>
      <HeadCell>
        <IconCell as="span" $w={28} $h={18}><FaTag size={11} /></IconCell>
        <Text $w={31}>#</Text>Source Name
      </HeadCell>
      <HeadCell><Eye /><Box as="span" $none><FaVolumeUp size={11} /></Box><Box as="span" $none><Svg w={8} h={8}><circle cx="4" cy="4" r="3.600" fill="currentColor" stroke="none" /></Svg></Box><Box as="span" $none><FaLock size={10} /></Box></HeadCell>
      <HeadCell><Text $w={73}>Mode</Text><Text $w={14}>T</Text>TrkMat</HeadCell>
      <HeadCell>
        <Shy /><Sun /><Box as="span" $none><Svg w={11} h={10}><path d="M0 1l10 8M3 1v3M7 5v3" strokeWidth="1.200" /></Svg></Box>
        <Box as="span" $none><i>fx</i></Box><Film /><Blur />
        <Box as="span" $none><Svg w={11} h={11}><circle cx="5.500" cy="5.500" r="4.700" /><path d="M9 2A5 5 0 0 1 2 9z" fill="currentColor" stroke="none" /></Svg></Box><Cube />
      </HeadCell>
      <HeadCell>Parent &amp; Link</HeadCell>
    </HeadRow>
    <Row $layer>
      <Name $depth={0}>
        <Twirl aria-label="Collapse"><Chev /></Twirl>
        <Swatch $color={c.layer} $s={12} />
        <Index>1</Index>
        <FaStar size={11} color={c.icon} />
        <NameInput aria-label="Layer name" defaultValue="Shape Layer 1" />
      </Name>
      <Cell><Box aria-label="Visible"><Eye /></Box><Box $none aria-label="Audio" /><Box aria-label="Solo" /><Box aria-label="Lock" /></Cell>
      <Cell><Drop w={71} h={16} value="Normal" label="Layer mode" /><Box aria-label="Preserve transparency" /></Cell>
      <Cell>
        <Box aria-label="Shy"><Shy /></Box><Box aria-label="Collapse transformations"><Sun /></Box><Box aria-label="Quality"><Svg w={11} h={11}><path d="M1 10L10 1" /></Svg></Box>
        <Box $none aria-label="Effects" /><Box $none aria-label="Frame blending" /><Box aria-label="Motion blur" /><Box aria-label="Adjustment layer" /><Box aria-label="3D layer" />
      </Cell>
      <Cell><PickWhip $ml={0} aria-label="Parent pick whip"><Whip /></PickWhip><Drop w={149} h={16} value="None" label="Parent" /></Cell>
    </Row>
    {rows.map(r => (
      <Row key={r.name}>
        <Name $depth={r.depth}>
          {r.prop ? <StopWatch aria-label={`Animate ${r.name}`}><Watch /></StopWatch> : <Twirl aria-label={`Toggle ${r.name}`}><Chev /></Twirl>}
          <NameText $on={r.on}>{r.name}</NameText>
        </Name>
        <Cell>{r.eye && <Box $dark aria-label={`Show ${r.name}`}><Eye /></Box>}</Cell>
        <span />
        <Cell>{r.value}</Cell>
        <Cell>{r.prop && <PickWhip $ml={12} aria-label={`Link ${r.name}`}><Whip /></PickWhip>}</Cell>
      </Row>
    ))}
  </Outline>
);

const TimeGraph = () => (
  <>
    <Graph>
      <NavBar><Knob $h={8} /><Knob $end $h={8} /></NavBar>
      <Ruler>{ticks.map(t => <Tick key={t}>{t}</Tick>)}</Ruler>
      <WorkArea><Knob $h={15} /><Knob $end $h={15} /></WorkArea>
      <Cached />
      <Tracks>
        <Bar />
        {rows.map(r => (
          <Lane key={r.name}><Svg w={9} h={16}><path d="M1 3h7M1 13h7" strokeWidth="1.500" /><path d="M4.500 3v10" strokeWidth="2" /></Svg></Lane>
        ))}
      </Tracks>
      <PlayHead><Svg w={11} h={14}><path d="M0 0h11v7l-5.500 7L0 7z" fill="currentColor" stroke="none" /></Svg></PlayHead>
    </Graph>
    <Edge>
      <EdgeBtn aria-label="Add marker"><Svg w={12} h={14}><path d="M0 0h11v9l-5.500 5L0 9z" fill="currentColor" stroke="none" /></Svg></EdgeBtn>
      <EdgeBtn aria-label="Reveal source"><Svg w={14} h={13}><path d="M6 2h7v8H6z" fill="currentColor" stroke="none" /><path d="M7 1L1 7h6z" fill={c.panel} strokeWidth="1.200" /><circle cx="6" cy="9" r="3" fill={c.panel} /></Svg></EdgeBtn>
    </Edge>
  </>
);

export default function App() {
  return (
    <Shell>
      <Global />
      <SystemBar />
      <TitleBar>
        <Lights>
          <RedLight $color="#fb5a52" aria-label="Close" />
          <Light $color="#fdbc2e" aria-label="Minimize" />
          <Light $color="#2ac840" aria-label="Zoom" />
        </Lights>
        Adobe After Effects 2020 - Untitled Project *
      </TitleBar>
      <AppTools />
      <Upper>
        <Panel $w={397}>
          <PanelTabs>
            <CutTab>te Nulls From Paths</CutTab>
            <PanelTab $line>
              <Cross /><Swatch $color={c.layer} /><OpenLock />
              <TabTitle><span>Effect Controls <Blue>Shape Layer 1</Blue></span><Burger /></TabTitle>
            </PanelTab>
            <TabsMore aria-label="More tabs"><More /></TabsMore>
          </PanelTabs>
          <Source>Comp 1 • Shape Layer 1</Source>
          <Empty />
        </Panel>
        <Sliver $w={42}>
          <SliverTop><Cross /></SliverTop>
          <SliverLine />
          <SliverFoot>
            <IconCell aria-label="Preview" $w={21} $dim><Svg w={14} h={12}><path d="M0 0h9v7H0z" fill="currentColor" stroke="none" /><path d="M10.500 2.500v6.500H3M13 5v6.500H5" strokeWidth="1.200" /></Svg></IconCell>
            <IconCell aria-label="Monitor" $w={20} $dim><Svg w={13} h={12}><path d="M.8 .8h11.400v7.400H.8zM6.500 8v3M3 11.300h7" strokeWidth="1.300" /></Svg></IconCell>
          </SliverFoot>
        </Sliver>
        <Composition />
        <Info />
      </Upper>
      <Timeline>
        <CompTabs>
          <CompTab><Swatch $color={c.tan} />Screen Shot 2020-04-15 at 9.00.45 AM</CompTab>
          <CompTab><Swatch $color={c.tan} />Shape Layer 1 Comp 2</CompTab>
          <CompTab $on><Cross /><Swatch $color={c.tan} />Comp 1 <Burger /></CompTab>
        </CompTabs>
        <TimelineBody>
          <LayerOutline />
          <TimeGraph />
        </TimelineBody>
        <Note>
          <svg width="71" height="42" viewBox="0 0 71 42" fill="none">
            <path d="M14 14C24 30 40 37 70 37" stroke="#f7e60c" strokeWidth="4" />
            <path d="M0 0l23 10L6 23z" fill="#f7e60c" />
          </svg>
          <NoteText>Reset to 0, 0 to snap the ellipse to the center of the shape layer</NoteText>
        </Note>
      </Timeline>
    </Shell>
  );
}
